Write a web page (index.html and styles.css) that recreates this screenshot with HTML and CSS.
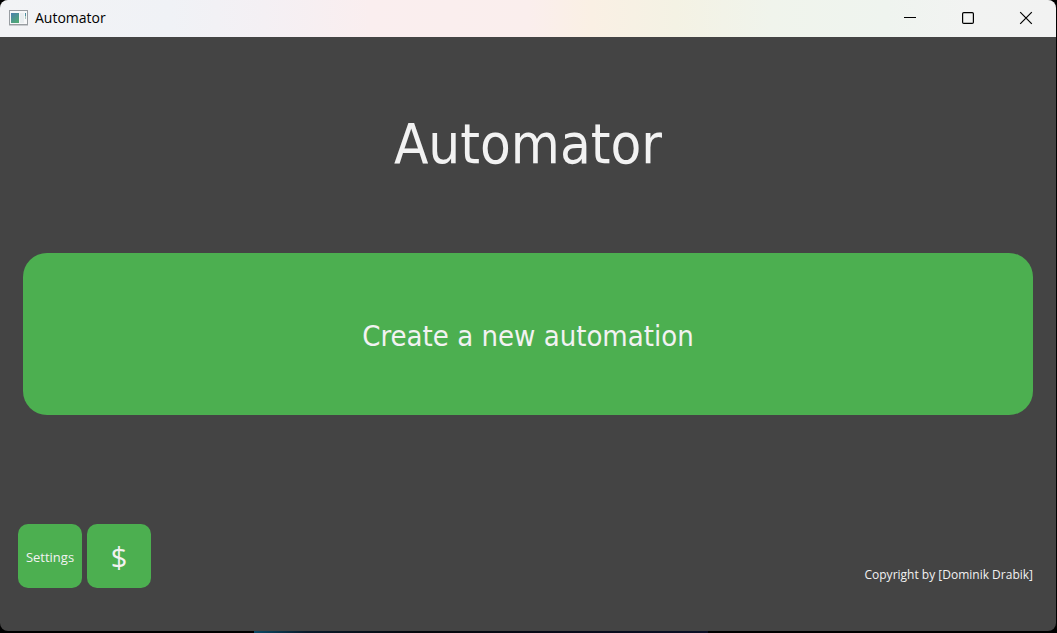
FILE: index.html
```html
<!DOCTYPE html>
<html lang="en">
<head>
<meta charset="utf-8">
<title>Automator</title>
<link rel="stylesheet" href="styles.css">
</head>
<body>
<div class="window">
  <header class="titlebar">
    <svg class="app-icon" width="20" height="16" viewBox="0 0 20 16" aria-hidden="true">
      <defs>
        <linearGradient id="pane" x1="0" y1="0" x2="0.6" y2="1">
          <stop offset="0" stop-color="#4a7fae"/>
          <stop offset="1" stop-color="#4fa877"/>
        </linearGradient>
      </defs>
      <rect x="0.5" y="0.5" width="18" height="14" fill="#f7f8f9" stroke="#989da1"/>
      <path d="M0 15.5h19" stroke="#c8cbce"/>
      <rect x="2" y="3" width="8" height="10" fill="url(#pane)"/>
      <rect x="11" y="3" width="4" height="10" fill="#e9eef0"/>
      <rect x="16" y="3" width="1" height="3" fill="#4c8fa0"/>
      <rect x="16" y="6" width="1" height="3" fill="#a5c7bd"/>
    </svg>
    <span class="app-name">Automator</span>
    <div class="controls">
      <button class="control" type="button" aria-label="Minimize">
        <svg width="14" height="14" viewBox="0 0 14 14"><path d="M1 6.5h12" stroke="#000"/></svg>
      </button>
      <button class="control" type="button" aria-label="Maximize">
        <svg width="14" height="14" viewBox="0 0 14 14"><rect x="1.6" y="1.6" width="10.8" height="10.8" rx="1.2" fill="none" stroke="#000" stroke-width="1.2"/></svg>
      </button>
      <button class="control" type="button" aria-label="Close">
        <svg width="14" height="14" viewBox="0 0 14 14"><path d="M1.2 1.2l11.6 11.6M12.8 1.2L1.2 12.8" stroke="#000" stroke-width="1.2"/></svg>
      </button>
    </div>
  </header>
  <main class="content">
    <h1 class="title">Automator</h1>
    <button class="create" type="button">Create a new automation</button>
    <footer class="footer">
      <div class="actions">
        <button class="tile" type="button">Settings</button>
        <button class="tile tile-donate" type="button">$</button>
      </div>
      <p class="copyright">Copyright by [Dominik Drabik]</p>
    </footer>
  </main>
</div>
</body>
</html>
```

FILE: styles.css
```css
* {
  box-sizing: border-box;
}

body {
  margin: 0;
  min-height: 100vh;
  display: flex;
  padding: 0 1px 2px 0;
  background: linear-gradient(90deg, #000 24%, #0b4a66 24%, #0a1a2a 29%, #05070c 40%, #0b0f26 67%, #000 67%);
  font-family: "DejaVu Sans Condensed", "Noto Sans", sans-serif;
  color: #f2f2f2;
}

.window {
  flex: 1;
  display: flex;
  flex-direction: column;
  overflow: hidden;
  border-radius: 8px;
  background: #444;
}

.titlebar {
  display: flex;
  align-items: center;
  height: 37px;
  padding: 0 1px 2px 9px;
  background: linear-gradient(90deg, #f2f3f5 0%, #f0f2f6 16%, #f4f0f4 25%, #faeeef 35%, #faeeed 50%, #faf0e4 56%, #f4f2e4 64%, #f0f4ec 73%, #eff4ef 84%, #f2f3f2 92%, #f2f2f2 100%);
  color: #000;
}

.app-icon {
  margin-right: 6px;
}

.app-name {
  font: 14px/22px "Open Sans", "Noto Sans", sans-serif;
}

.controls {
  display: flex;
  align-self: stretch;
  margin-left: auto;
}

.control {
  display: grid;
  place-items: center;
  width: 58px;
  padding: 0;
  border: 0;
  background: none;
}

.content {
  flex: 1;
  display: flex;
  flex-direction: column;
  padding: 0 23px 43px 18px;
}

.title {
  flex: 1;
  display: grid;
  place-items: center;
  margin: 0;
  padding: 0 0 2px 5px;
  font-size: 56px;
  font-weight: 400;
  line-height: 70px;
}

.create {
  margin-left: 5px;
  padding: 65px 20px 61px;
  border: 0;
  border-radius: 24px;
  background: #4caf50;
  color: #f2f2f2;
  font: inherit;
  font-size: 29px;
  line-height: 36px;
}

.footer {
  display: flex;
  justify-content: space-between;
  align-items: flex-end;
  margin-top: 109px;
}

.actions {
  display: flex;
  gap: 5px;
}

.tile {
  width: 64px;
  height: 64px;
  padding: 2px 0 0;
  border: 0;
  border-radius: 10px;
  background: #4caf50;
  color: #f2f2f2;
  font: 13px/20px "Open Sans", "Noto Sans", sans-serif;
}

.tile-donate {
  font-size: 29px;
}

.copyright {
  margin: 0 0 4px;
  font: 12px/18px "Open Sans", "Noto Sans", sans-serif;
}
```
